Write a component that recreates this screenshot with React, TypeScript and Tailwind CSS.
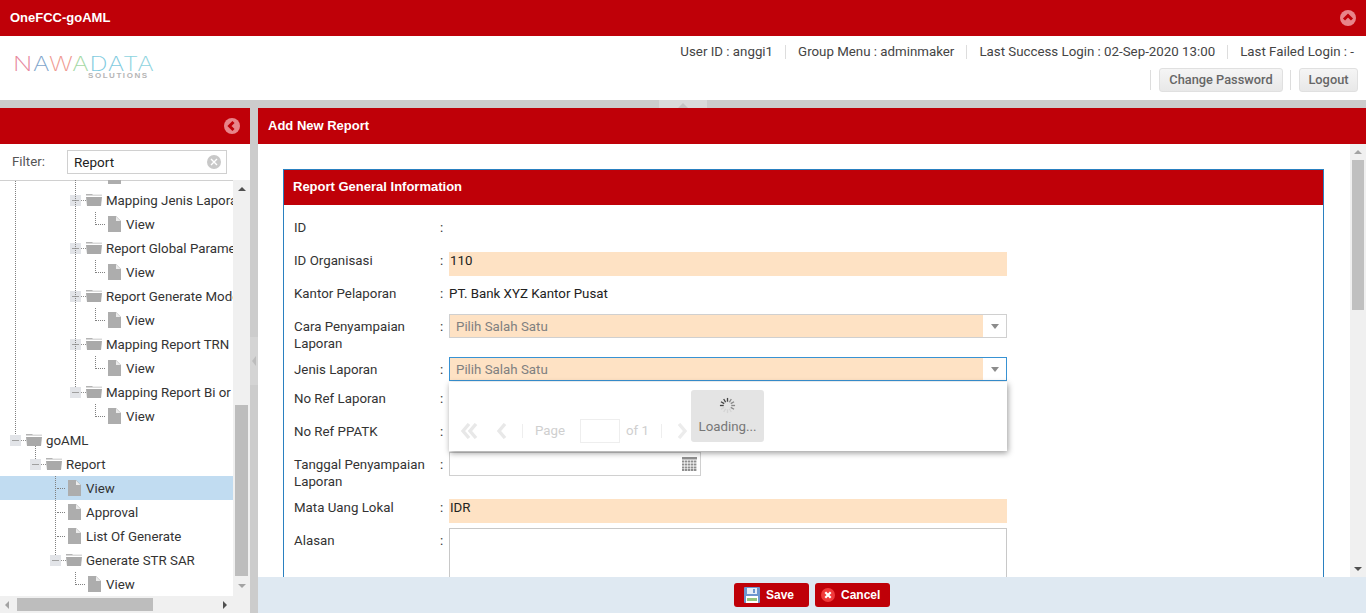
import React from "react";

const Folder = () => (
  <svg width="16" height="12" viewBox="0 0 16 12" className="shrink-0">
    <path d="M0 1.600V0h6l1 .8h9v.8z" fill="#b4b4b4" />
    <path d="M0 3h16l-1 9H1z" fill="#a9a9a9" />
  </svg>
);
const FileIcon = () => (
  <svg width="13" height="16" viewBox="0 0 13 16" className="shrink-0">
    <path d="M0 0h8l5 5v11H0z" fill="#adadad" />
    <path d="M8 .5l4.500 4.500H8z" fill="#ececec" />
  </svg>
);

const Expander = () => (
  <span className="w-[11px] h-[11px] bg-[#e2e4e8] flex items-center justify-center shrink-0">
    <span className="w-[7px] h-px bg-[#a0a0a0]" />
  </span>
);

type Row = { t: string; k: "f" | "d"; x: number; sel?: boolean; elbow?: boolean; dash?: boolean };
const rows: Row[] = [
  { t: "", k: "d", x: 108 },
  { t: "Mapping Jenis Laporan", k: "f", x: 70 },
  { t: "View", k: "d", x: 108, elbow: true },
  { t: "Report Global Parameter", k: "f", x: 70 },
  { t: "View", k: "d", x: 108, elbow: true },
  { t: "Report Generate Mode", k: "f", x: 70 },
  { t: "View", k: "d", x: 108, elbow: true },
  { t: "Mapping Report TRN", k: "f", x: 70 },
  { t: "View", k: "d", x: 108, elbow: true },
  { t: "Mapping Report Bi or", k: "f", x: 70 },
  { t: "View", k: "d", x: 108, elbow: true },
  { t: "goAML", k: "f", x: 10 },
  { t: "Report", k: "f", x: 30 },
  { t: "View", k: "d", x: 68, sel: true, dash: true },
  { t: "Approval", k: "d", x: 68, dash: true },
  { t: "List Of Generate", k: "d", x: 68, dash: true },
  { t: "Generate STR SAR", k: "f", x: 50 },
  { t: "View", k: "d", x: 88, elbow: true },
];

function TreeRow({ r }: { r: Row }) {
  return (
    <div
      className={`relative h-6 flex items-center whitespace-nowrap ${r.sel ? "bg-[#c1dcf1]" : ""}`}
      style={{ paddingLeft: r.x }}
    >
      {r.k === "f" ? (
        <>
          <Expander />
          <span className="w-[5px] shrink-0 border-t border-dotted border-[#909090]" />
          <Folder />
          <span className="ml-1 pt-[2px]">{r.t}</span>
        </>
      ) : (
        <>
          {r.elbow && (
            <span
              className="absolute top-0 h-[13px] w-[10px] border-l border-b border-dotted border-[#808080]"
              style={{ left: r.x - 13 }}
            />
          )}
          {r.dash && (
            <span className="absolute top-3 h-0 w-[8px] border-t border-dotted border-[#808080]" style={{ left: r.x - 11 }} />
          )}
          <FileIcon />
          {r.t && <span className="ml-[5px] pt-[2px]">{r.t}</span>}
        </>
      )}
    </div>
  );
}

function Scrollbar() {
  return (
    <div className="w-[17px] bg-[#f0f0f0] flex flex-col items-center shrink-0">
      <span className="mt-[7px] border-x-[4px] border-x-transparent border-b-[4px] border-b-[#505050]" />
      <div className="flex-1 w-[13px] mt-[214px] bg-[#bdbdbd]" />
      <span className="my-[8px] border-x-[4px] border-x-transparent border-t-[4px] border-t-[#a3a3a3]" />
    </div>
  );
}

function Field({ label, mt, pt = 4, children }: { label: string; mt: number; pt?: number; children?: React.ReactNode }) {
  return (
    <div className="flex min-h-6" style={{ marginTop: mt }}>
      <div className="w-[146px] leading-[17px] shrink-0" style={{ paddingTop: pt }}>{label}</div>
      <div className="w-[9px] leading-[17px] shrink-0" style={{ paddingTop: pt }}>:</div>
      {children}
    </div>
  );
}

const Peach = ({ v }: { v: string }) => (
  <div className="w-[558px] h-6 bg-[#fee2c4] pl-[1px] leading-[17px] text-[#222]">{v}</div>
);

function Combo({ active }: { active?: boolean }) {
  return (
    <div className={`w-[558px] h-6 border flex ${active ? "border-[#3892d3]" : "border-[#d0d0d0]"}`}>
      <div className="flex-1 bg-[#fee2c4] pl-[6px] leading-[24px] text-[#808080]">Pilih Salah Satu</div>
      <div className="w-[23px] bg-white flex items-center justify-center">
        <span className="border-x-[4px] border-x-transparent border-t-[5px] border-t-[#8c8c8c]" />
      </div>
    </div>
  );
}

const Chevron = ({ dir, double }: { dir: "l" | "r"; double?: boolean }) => (
  <svg width={double ? 17 : 10} height="16" viewBox={double ? "0 0 17 16" : "0 0 10 16"} className="shrink-0">
    {dir === "l" ? (
      <>
        <path d="M8 1 2 8l6 7" stroke="#e8e8e8" strokeWidth="3.400" fill="none" />
        {double && <path d="M15 1 9 8l6 7" stroke="#e8e8e8" strokeWidth="3.400" fill="none" />}
      </>
    ) : (
      <path d="M2 1l6 7-6 7" stroke="#ececec" strokeWidth="3.400" fill="none" />
    )}
  </svg>
);

const spokes = Array.from({ length: 12 }, (_, i) => i * 30);

export default function App() {
  return (
    <div className="h-[613px] w-[1366px] overflow-hidden flex flex-col bg-[#cccccc] text-[13.3px] text-[#333] font-['Roboto','Liberation_Sans',sans-serif]">
      <div className="h-9 bg-[#bf0008] flex items-center justify-between pl-[10px] pr-[10px] shrink-0">
        <span className="text-white font-bold text-[13px] font-['Liberation_Sans',sans-serif]">OneFCC-goAML</span>
        <svg width="16" height="16" viewBox="0 0 16 16">
          <circle cx="8" cy="8" r="8" fill="#e8848a" />
          <path d="M4 9.500 8 5.500l4 4" stroke="#bf0008" strokeWidth="3" fill="none" />
        </svg>
      </div>

      <div className="h-16 bg-white flex justify-between shrink-0">
        <div className="pl-[13px] pt-[21px] select-none">
          <div className="text-[20px] leading-[15px] tracking-[0.6px] font-['Inter',sans-serif] font-extralight w-[115px] origin-left scale-x-[1.26]">
            <span className="text-[#e8899f]">N</span>
            <span className="text-[#7fa6cc]">A</span>
            <span className="text-[#ef9a91]">W</span>
            <span className="text-[#a5d9a5]">A</span>
            <span className="text-[#7fcbe0]">D</span>
            <span className="text-[#7fcbe0]">A</span>
            <span className="text-[#8fd4e0]">T</span>
            <span className="text-[#8fd4e0]">A</span>
          </div>
          <div className="ml-[75px] text-[8px] leading-[7px] tracking-[1.55px] text-[#b5b5b5] font-['Liberation_Sans',sans-serif] font-bold">SOLUTIONS</div>
        </div>
        <div className="flex flex-col items-end pr-2 pt-[7px] text-[#444]">
          <div className="flex items-center h-[17px] pr-[4px]">
            <span>User ID : anggi1</span>
            <span className="w-px h-[14px] bg-[#ddd] mx-3" />
            <span>Group Menu : adminmaker</span>
            <span className="w-px h-[14px] bg-[#ddd] mx-3" />
            <span>Last Success Login : 02-Sep-2020 13:00</span>
            <span className="w-px h-[14px] bg-[#ddd] mx-3" />
            <span>Last Failed Login : -</span>
          </div>
          <div className="flex items-center mt-[8px]">
            <span className="w-px h-5 bg-[#ddd] mr-2" />
            <button className="h-6 w-[124px] rounded-[3px] border border-[#e0e0e0] bg-gradient-to-b from-[#f5f5f5] to-[#e8e8e8] text-[#666] font-medium text-[12.8px]">Change Password</button>
            <span className="w-px h-5 bg-[#ddd] ml-[7px] mr-2" />
            <button className="h-6 w-[59px] rounded-[3px] border border-[#e0e0e0] bg-gradient-to-b from-[#f5f5f5] to-[#e8e8e8] text-[#666] font-medium text-[12.8px]">Logout</button>
          </div>
        </div>
      </div>

      <div className="h-2 shrink-0 relative bg-[#cccccc]">
        <div className="absolute left-[659px] top-0 w-[48px] h-2 bg-[#dadada] flex justify-center pt-[2px]">
          <span className="border-x-[5px] border-x-transparent border-b-[5px] border-b-[#c4c4c4]" />
        </div>
      </div>

      <div className="flex-1 flex min-h-0">
        <div className="w-[250px] flex flex-col bg-white shrink-0">
          <div className="h-9 bg-[#bf0008] flex items-center justify-end pr-[10px] shrink-0">
            <svg width="16" height="16" viewBox="0 0 16 16">
              <circle cx="8" cy="8" r="8" fill="#e8848a" />
              <path d="M9.500 4 5.500 8l4 4" stroke="#bf0008" strokeWidth="3" fill="none" />
            </svg>
          </div>
          <div className="h-9 flex items-center border-b border-[#d0d0d0] shrink-0 box-content -mb-px">
            <span className="w-[67px] pl-3 text-[#555]">Filter:</span>
            <div className="w-[160px] h-6 border border-[#d0d0d0] flex items-center justify-between pl-[6px] pr-[5px] text-[13.5px] text-[#222]">
              <span>Report</span>
              <svg width="14" height="14" viewBox="0 0 14 14">
                <circle cx="7" cy="7" r="7" fill="#c8c8c8" />
                <path d="M4 4l6 6M10 4l-6 6" stroke="#fff" strokeWidth="1.400" />
              </svg>
            </div>
          </div>
          <div className="flex-1 flex min-h-0">
            <div className="w-[233px] relative overflow-hidden">
              <div className="-mt-[16px] relative">
                {rows.map((r, i) => (
                  <TreeRow key={i} r={r} />
                ))}
                <span className="absolute left-[15px] top-0 h-[270px] border-l border-dotted border-[#808080]" />
                <span className="absolute left-[75px] top-0 h-[223px] border-l border-dotted border-[#808080]" />
                <span className="absolute left-[35px] top-[282px] h-[13px] border-l border-dotted border-[#808080]" />
                <span className="absolute left-[55px] top-[312px] h-[79px] border-l border-dotted border-[#808080]" />
              </div>
            </div>
            <Scrollbar />
          </div>
          <div className="h-[17px] bg-[#f0f0f0] flex items-center shrink-0">
            <span className="ml-[5px] border-y-[4px] border-y-transparent border-r-[4px] border-r-[#a3a3a3]" />
            <div className="ml-[8px] w-[136px] h-[13px] bg-[#bdbdbd]" />
            <span className="ml-[70px] border-y-[4px] border-y-transparent border-l-[4px] border-l-[#505050]" />
          </div>
        </div>

        <div className="w-2 shrink-0 bg-[#cccccc] flex items-center justify-center">
          <span className="h-12 w-2 bg-[#d4d4d4] flex items-center justify-center">
            <span className="border-y-[5px] border-y-transparent border-r-[4px] border-r-[#bcbcbc]" />
          </span>
        </div>

        <div className="flex-1 flex flex-col min-w-0">
          <div className="h-9 bg-[#bf0008] flex items-center pl-[10px] text-white font-bold text-[13px] font-['Liberation_Sans',sans-serif] shrink-0">Add New Report</div>
          <div className="flex-1 flex min-h-0 bg-white">
            <div className="flex-1 overflow-hidden pl-[25px] pr-[26px] pt-[25px]">
              <div className="border-x border-t border-[#2a80c0] h-[600px]">
                <div className="h-[35px] bg-[#bf0008] flex items-center pl-[9px] pb-[2px] text-white font-bold text-[13px] font-['Liberation_Sans',sans-serif]">Report General Information</div>
                <div className="pl-[10px] relative">
                  <Field label="ID" mt={10} />
                  <Field label="ID Organisasi" mt={13} pt={0}><Peach v="110" /></Field>
                  <Field label="Kantor Pelaporan" mt={5}>
                    <div className="leading-[17px] pt-[4px] text-[#222]">PT. Bank XYZ Kantor Pusat</div>
                  </Field>
                  <Field label="Cara Penyampaian Laporan" mt={9}><Combo /></Field>
                  <Field label="Jenis Laporan" mt={5}><Combo active /></Field>
                  <Field label="No Ref Laporan" mt={5} />
                  <Field label="No Ref PPATK" mt={9} />
                  <Field label="Tanggal Penyampaian Laporan" mt={9}>
                    <div className="w-[252px] h-6 border border-[#d0d0d0] flex items-center justify-end pr-[3px]">
                      <svg width="15" height="14" viewBox="0 0 15 14">
                        <rect width="15" height="2.500" fill="#8f8f8f" />
                        {[3.5, 6.5, 9.5, 12].map((y) =>
                          [0, 3, 6, 9, 12].map((x) => (
                            <rect key={`${x}-${y}`} x={x} y={y} width="2.400" height="2" fill="#8f8f8f" />
                          ))
                        )}
                      </svg>
                    </div>
                  </Field>
                  <Field label="Mata Uang Lokal" mt={9} pt={0}><Peach v="IDR" /></Field>
                  <Field label="Alasan" mt={5}>
                    <div className="w-[558px] h-[90px] border border-[#c8c8c8] border-b-0" />
                  </Field>

                  <div className="absolute left-[165px] top-[167px] w-[558px] h-[69px] bg-white shadow-[1px_2px_6px_rgba(0,0,0,0.4)]">
                    <div className="absolute left-0 bottom-[8px] h-6 flex items-center text-[#cfcfcf]">
                      <span className="ml-[12px]"><Chevron dir="l" double /></span>
                      <span className="ml-[19px]"><Chevron dir="l" /></span>
                      <span className="ml-[15px] w-px h-[14px] bg-[#eee]" />
                      <span className="ml-[12px] w-[45px]">Page</span>
                      <span className="w-10 h-6 border border-[#eee] shrink-0" />
                      <span className="ml-[6px] w-[35px]">of 1</span>
                      <span className="w-px h-[14px] bg-[#eee]" />
                      <span className="ml-[15px]"><Chevron dir="r" /></span>
                    </div>
                    <div className="absolute left-[242px] top-2 w-[73px] h-[52px] bg-[#e4e4e4] rounded-[3px] flex flex-col items-center pt-[7px]">
                      <svg width="17" height="17" viewBox="0 0 18 18">
                        {spokes.map((a, i) => (
                          <line
                            key={a}
                            x1="9"
                            y1="1"
                            x2="9"
                            y2="5"
                            stroke={i > 7 ? "#d4d4d4" : i > 3 ? "#888" : "#444"}
                            strokeWidth="1.400"
                            transform={`rotate(${a + 270} 9 9)`}
                          />
                        ))}
                      </svg>
                      <span className="mt-[3px] text-[#777]">Loading...</span>
                    </div>
                  </div>
                </div>
              </div>
            </div>
            <Scrollbar2 />
          </div>
          <div className="h-9 bg-[#dfe9f2] flex items-center justify-center gap-[6px] shrink-0 text-white font-bold text-[12px] font-['Liberation_Sans',sans-serif]">
            <button className="w-[75px] h-6 bg-[#bf0008] rounded-[3px] flex items-center pl-[10px] gap-[6px]">
              <svg width="16" height="16" viewBox="0 0 16 16">
                <rect width="16" height="16" rx="1" fill="#6d97cf" />
                <rect x="3" y="1" width="10" height="6" fill="#e6eef8" />
                <rect x="9" y="2" width="2" height="4" fill="#6d97cf" />
                <rect x="2" y="9" width="12" height="7" fill="#fff" />
                <rect x="3" y="11" width="10" height="3" fill="#93c47d" />
              </svg>
              Save
            </button>
            <button className="w-[75px] h-6 bg-[#bf0008] rounded-[3px] flex items-center pl-[6px] gap-[6px]">
              <svg width="14" height="14" viewBox="0 0 14 14">
                <circle cx="7" cy="7" r="7" fill="#f03a3a" />
                <path d="M4.300 4.300l5.400 5.400M9.700 4.300l-5.400 5.400" stroke="#fff" strokeWidth="2.200" />
              </svg>
              Cancel
            </button>
          </div>
        </div>
      </div>
    </div>
  );
}

function Scrollbar2() {
  return (
    <div className="w-4 bg-[#f0f0f0] flex flex-col items-center shrink-0">
      <span className="mt-[6px] border-x-[4px] border-x-transparent border-b-[4px] border-b-[#a3a3a3]" />
      <div className="w-3 h-[150px] mt-[6px] bg-[#c0c0c0]" />
      <div className="flex-1" />
      <span className="mb-[6px] border-x-[4px] border-x-transparent border-t-[4px] border-t-[#505050]" />
    </div>
  );
}
